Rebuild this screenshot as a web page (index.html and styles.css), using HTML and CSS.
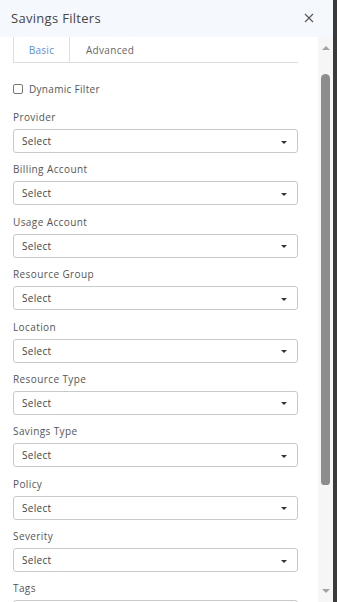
FILE: index.html
```html
<!DOCTYPE html>
<html>
<head>
<meta charset="utf-8">
<link rel="stylesheet" href="styles.css">
</head>
<body>
<div class="page">
  <div class="panel">
    <div class="header">
      <div class="title">Savings Filters</div>
      <svg class="close" width="10" height="10" viewBox="0 0 10 10"><path d="M1 1L9 9M9 1L1 9" stroke="#555" stroke-width="1.1"/></svg>
    </div>
    <div class="body">
      <div class="content">
        <div class="tabs">
          <div class="tab active">Basic</div>
          <div class="tab">Advanced</div>
        </div>
        <label class="check"><span class="box"></span>Dynamic Filter</label>
        <div class="fields">
          <div class="field"><div class="label">Provider</div><div class="select"><span>Select</span><i class="caret"></i></div></div>
          <div class="field"><div class="label">Billing Account</div><div class="select"><span>Select</span><i class="caret"></i></div></div>
          <div class="field"><div class="label">Usage Account</div><div class="select"><span>Select</span><i class="caret"></i></div></div>
          <div class="field"><div class="label">Resource Group</div><div class="select"><span>Select</span><i class="caret"></i></div></div>
          <div class="field"><div class="label">Location</div><div class="select"><span>Select</span><i class="caret"></i></div></div>
          <div class="field"><div class="label">Resource Type</div><div class="select"><span>Select</span><i class="caret"></i></div></div>
          <div class="field"><div class="label">Savings Type</div><div class="select"><span>Select</span><i class="caret"></i></div></div>
          <div class="field"><div class="label">Policy</div><div class="select"><span>Select</span><i class="caret"></i></div></div>
          <div class="field"><div class="label">Severity</div><div class="select"><span>Select</span><i class="caret"></i></div></div>
          <div class="field"><div class="label">Tags</div><div class="select"><span>Select</span><i class="caret"></i></div></div>
        </div>
      </div>
      <div class="scrollbar">
        <i class="arrow up"></i>
        <div class="track"><div class="thumb"></div></div>
        <i class="arrow down"></i>
      </div>
    </div>
  </div>
  <div class="edge"></div>
</div>
</body>
</html>
```
FILE: styles.css
```css
* { box-sizing: border-box; }
html, body { margin: 0; padding: 0; }
body {
  font-family: "Open Sans", "Liberation Sans", sans-serif;
  background: #fff;
  width: 337px;
  height: 602px;
  overflow: hidden;
}
.page { display: flex; height: 602px; }
.panel { width: 333px; display: flex; flex-direction: column; height: 602px; }
.edge { width: 4px; background: #3a3a3a; }
.header {
  height: 37px;
  flex: none;
  background: #f5f9fe;
  display: flex;
  align-items: center;
  justify-content: space-between;
  padding: 0 19px 0 11px;
}
.title { font-size: 13px; color: #444; letter-spacing: 0.3px; margin-top: -2px; }
.close { display: block; margin-top: -2px; }
.body { flex: 1; display: flex; min-height: 0; }
.content { flex: 1; padding: 0 20px 0 13px; overflow: hidden; }
.tabs {
  display: flex;
  height: 26px;
  border-bottom: 1px solid #dedede;
}
.tab {
  font-size: 10px;
  color: #666;
  display: flex;
  align-items: center;
  padding: 0 16px;
  letter-spacing: 0.3px;
}
.tab.active {
  color: #5a8def;
  border-left: 1px solid #dedede;
  border-right: 1px solid #dedede;
  width: 57px;
  justify-content: center;
  padding: 0;
}
.check {
  display: flex;
  align-items: center;
  font-size: 10px;
  color: #555;
  margin-top: 20px;
  height: 12px;
  letter-spacing: 0.3px;
}
.box {
  width: 10px; height: 10px;
  border: 1px solid #777;
  border-radius: 2px;
  margin-right: 6px;
}
.fields { margin-top: 16px; display: flex; flex-direction: column; gap: 10.375px; }
.field { display: flex; flex-direction: column; }
.label { font-size: 10px; color: #555; line-height: 12px; height: 14px; margin-bottom: 4px; letter-spacing: 0.4px; }
.select {
  height: 24px;
  border: 1px solid #c9c9c9;
  border-radius: 3px;
  display: flex;
  align-items: center;
  justify-content: space-between;
  padding: 0 10px 0 8px;
  font-size: 10px;
  color: #444;
  letter-spacing: 0.3px;
}
.caret {
  width: 0; height: 0;
  border-left: 3px solid transparent;
  border-right: 3px solid transparent;
  border-top: 3px solid #333;
  margin-top: 2px;
}
.scrollbar {
  width: 15px;
  background: #f6f6f6;
  display: flex;
  flex-direction: column;
  align-items: center;
  padding: 9px 0 9px;
}
.arrow { width: 0; height: 0; border-left: 4px solid transparent; border-right: 4px solid transparent; }
.arrow.up { border-bottom: 4px solid #a3a3a3; }
.arrow.down { border-top: 4px solid #a3a3a3; }
.track { flex: 1; width: 100%; display: flex; justify-content: center; padding-top: 24px; }
.thumb { width: 9px; height: 411px; background: #8d8d8d; border-radius: 5px 5px 4px 4px; }
```
